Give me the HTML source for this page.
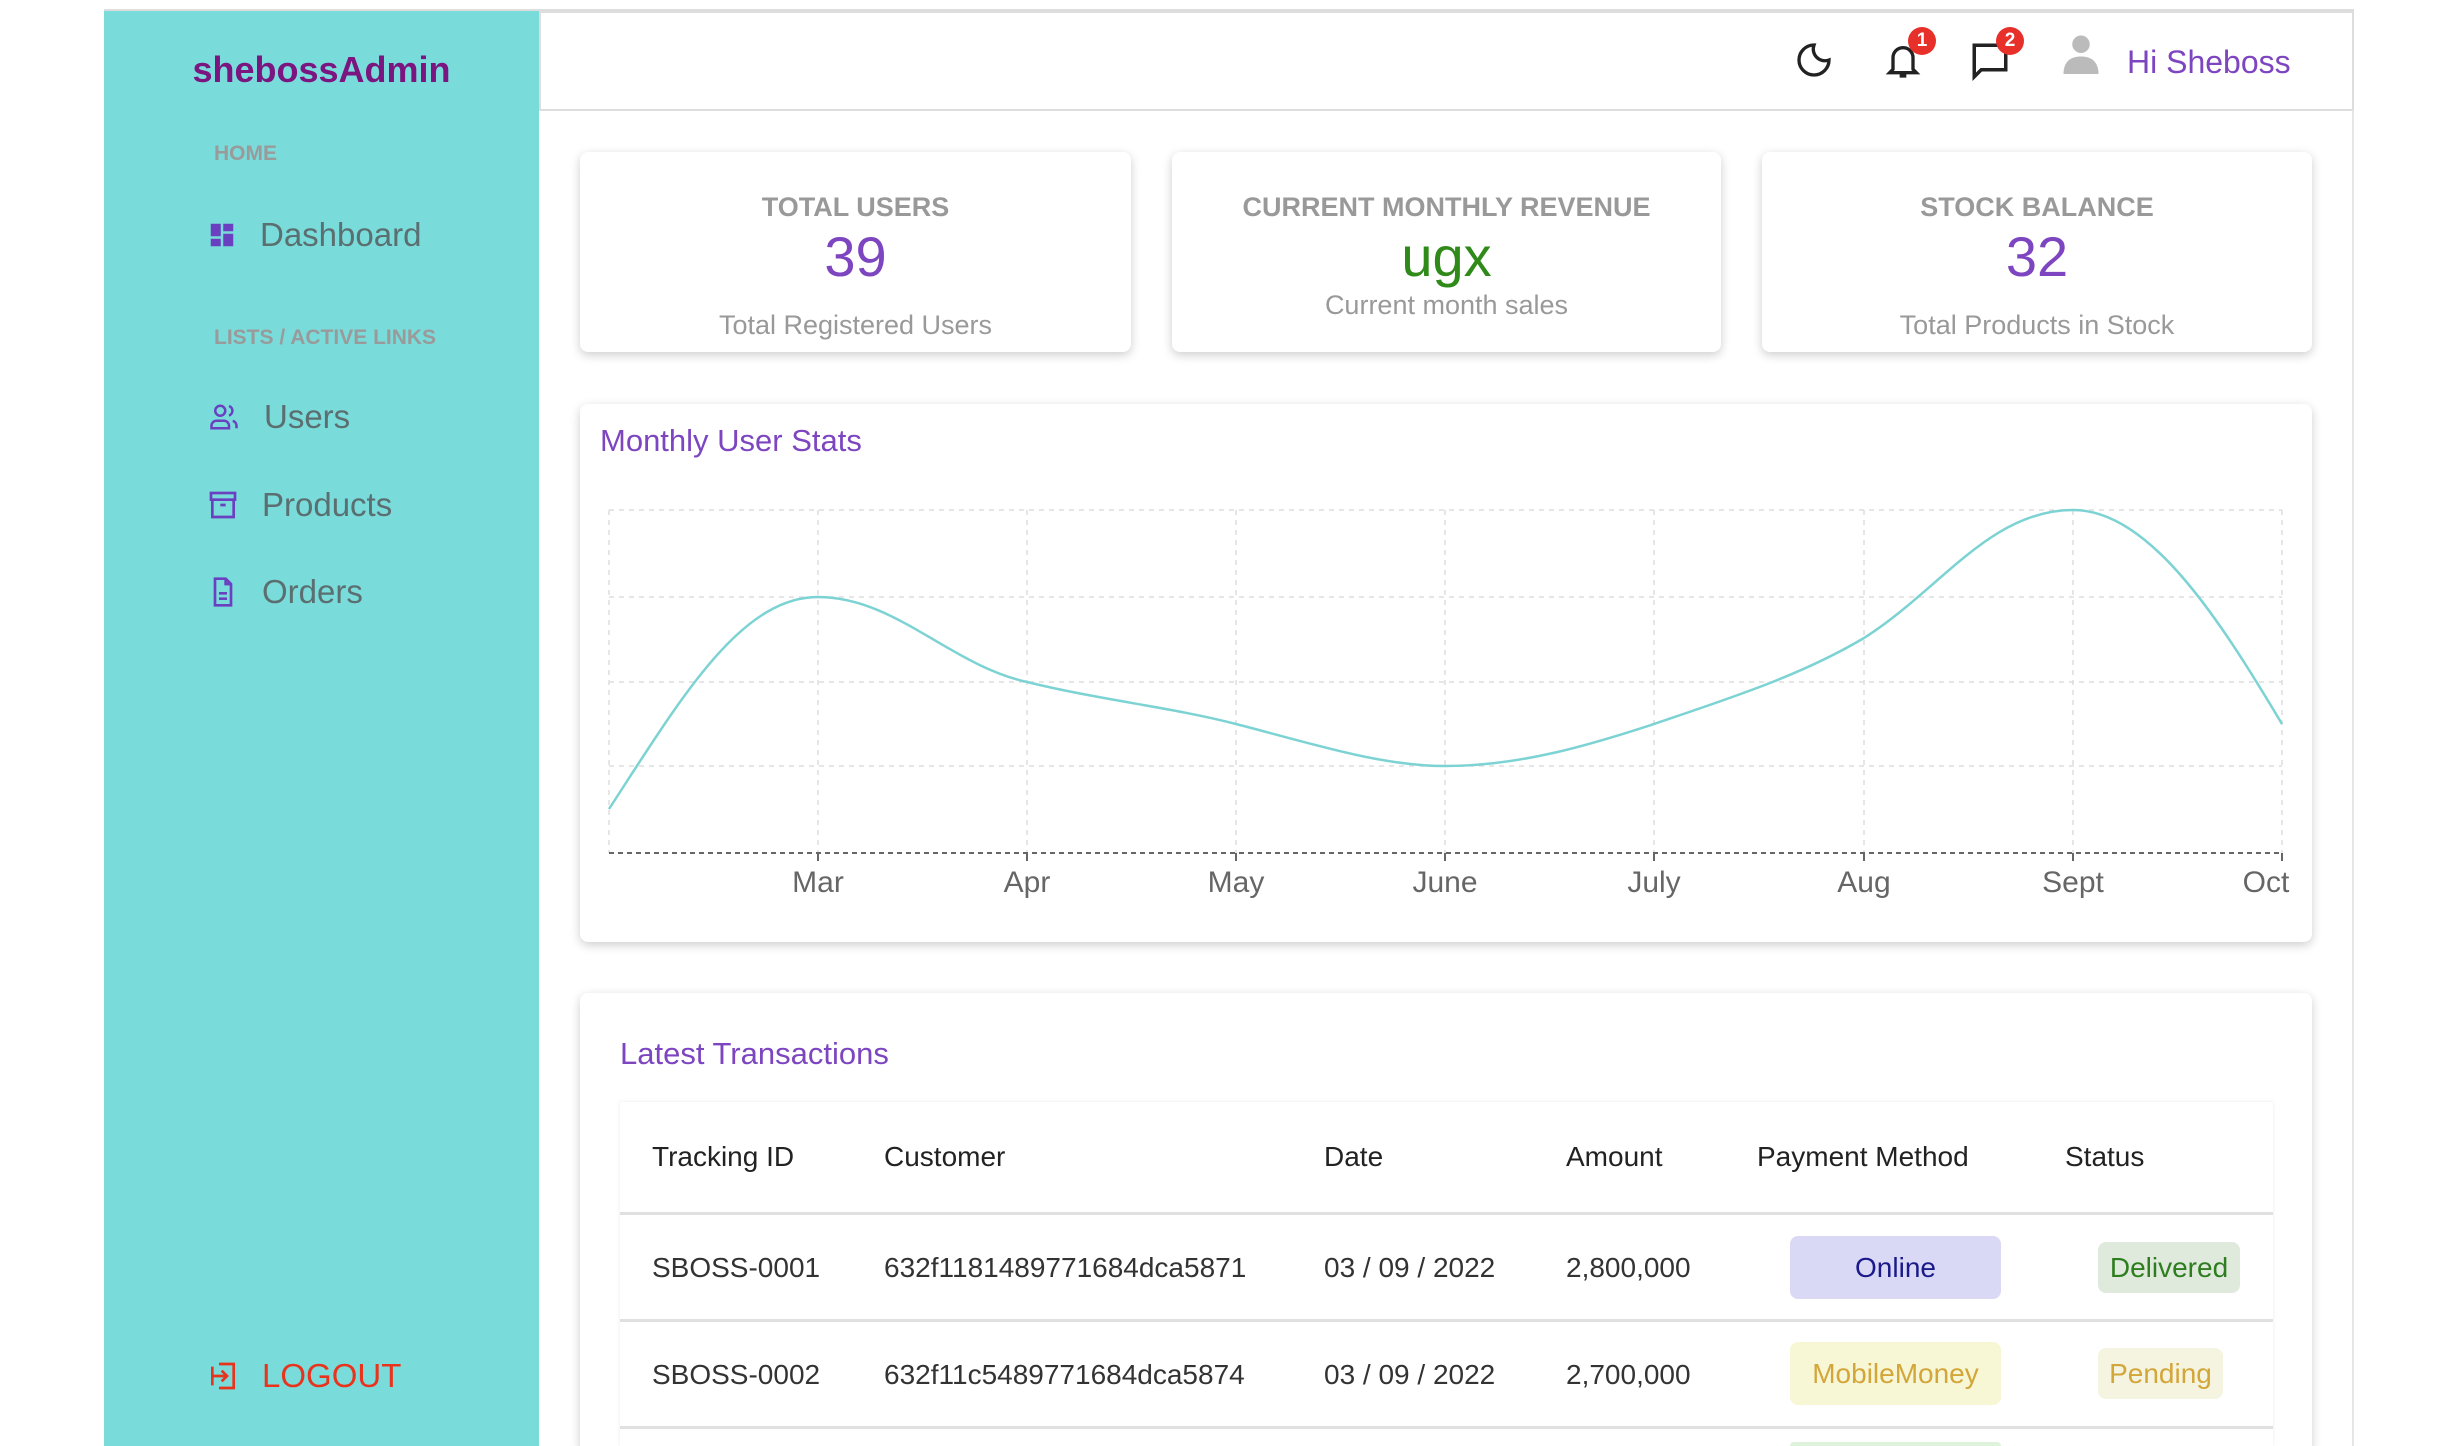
<!DOCTYPE html>
<html style="width:2450px;height:1446px;overflow:hidden"><head><meta charset="utf-8"><style>
*{margin:0;padding:0;box-sizing:border-box}
body{width:2450px;height:1446px;overflow:hidden;background:#fff;font-family:"Liberation Sans",Arial,sans-serif;position:relative}
.abs{position:absolute}
#sb{left:104px;top:11px;width:435px;height:1435px;background:#7adbdb}
.logo{left:0;width:435px;top:38px;text-align:center;font-size:36px;font-weight:bold;color:#7b1580}
.sec{left:110px;font-size:21px;font-weight:bold;color:#9a9a9a}
.nav{left:103px;font-size:33px;color:#5b6e70;display:flex;align-items:center}
.nav svg{margin-right:23px}
#hdr{left:539px;top:11px;width:1815px;height:100px;border:2px solid #ddd}
#rline{left:2352px;top:110px;width:2px;height:1336px;background:#e6e6e6}
.card{background:#fff;border-radius:8px;box-shadow:0 3px 10px rgba(0,0,0,.2)}
.stat{text-align:center}
.stat .t{position:absolute;left:0;right:0;top:40px;font-size:27px;font-weight:bold;color:#999}
.stat .n{position:absolute;left:0;right:0;top:72px;font-size:56px;color:#7d45c0}
.stat .s{position:absolute;left:0;right:0;top:158px;font-size:27px;color:#999}
.ttl{font-size:31px;color:#7d45c0}
.th{font-size:28px;color:#222}
.td{font-size:28px;color:#333}
.badge{position:absolute;border-radius:8px;font-size:28px;display:flex;align-items:center;justify-content:center}
.bdg{position:absolute;width:28px;height:28px;border-radius:50%;background:#e8302a;color:#fff;font-size:19px;font-weight:bold;text-align:center;line-height:28px}
#clip{position:absolute;left:0;top:0;width:2450px;height:1446px;overflow:hidden}
</style></head><body><div id="clip">
<div class="abs" style="left:104px;top:9px;width:2250px;height:2px;background:#ddd"></div>
<div id="sb" class="abs">
 <div class="abs logo">shebossAdmin</div>
 <div class="abs sec" style="top:131px">HOME</div>
 <div class="abs nav" style="top:205px"><svg width="30" height="30" viewBox="0 0 24 24"><path fill="#6a3fc0" d="M3 13h8V3H3zm0 8h8v-6H3zm10 0h8V11h-8zm0-18v6h8V3z"/></svg>Dashboard</div>
 <div class="abs sec" style="top:315px">LISTS / ACTIVE LINKS</div>
 <div class="abs nav" style="top:387px"><svg width="34" height="30" viewBox="0 0 24 24" fill="none" stroke="#6a3fc0" stroke-width="2"><circle cx="9" cy="7" r="4"/><path d="M2 21v-2a4 4 0 0 1 4-4h6a4 4 0 0 1 4 4v2zM16 3.2a4 4 0 0 1 0 7.6M22 21v-2a4 4 0 0 0-3-3.9"/></svg>Users</div>
 <div class="abs nav" style="top:475px"><svg width="32" height="32" viewBox="0 0 24 24" fill="none" stroke="#6a3fc0" stroke-width="2"><rect x="3" y="3" width="18" height="5"/><path d="M4 8v13h16V8M10 12h4"/></svg>Products</div>
 <div class="abs nav" style="top:562px"><svg width="32" height="32" viewBox="0 0 24 24" fill="none" stroke="#6a3fc0" stroke-width="2"><path d="M14 2H6v20h12V6zM14 2v4h4M9 13h6M9 17h6"/></svg>Orders</div>
 <div class="abs nav" style="top:1346px;color:#e8341c"><svg width="32" height="32" viewBox="0 0 24 24" fill="none" stroke="#e8341c" stroke-width="2"><path d="M9 3h11v18H9M3 12h12M11 8l4 4-4 4M4 5v14"/></svg>LOGOUT</div>
</div>
<div id="hdr" class="abs"></div>
<div id="rline" class="abs"></div>
<svg class="abs" style="left:1794px;top:40px" width="40" height="40" viewBox="0 0 24 24" fill="none" stroke="#222" stroke-width="2"><path d="M12 3a7 7 0 0 0 9 9 9 9 0 1 1-9-9z"/></svg>
<svg class="abs" style="left:1883px;top:40px" width="40" height="42" viewBox="0 0 24 24" fill="none" stroke="#222" stroke-width="2"><path d="M6 17V10a6 6 0 0 1 12 0v7l2 2H4zM10 21h4"/></svg>
<div class="bdg" style="left:1908px;top:27px">1</div>
<svg class="abs" style="left:1968px;top:40px" width="44" height="42" viewBox="0 0 24 24" fill="none" stroke="#222" stroke-width="2"><path d="M3 3h18v14H7l-4 4z"/></svg>
<div class="bdg" style="left:1996px;top:27px">2</div>
<svg class="abs" style="left:2060px;top:32px" width="42" height="42" viewBox="0 0 24 24"><circle cx="12" cy="7" r="5" fill="#bbb"/><path d="M2 24c0-7 4-10 10-10s10 3 10 10z" fill="#bbb"/></svg>
<div class="abs" style="left:2127px;top:44px;font-size:32px;color:#7d45c0">Hi Sheboss</div>

<div class="abs card stat" style="left:580px;top:152px;width:551px;height:200px"><div class="t">TOTAL USERS</div><div class="n">39</div><div class="s">Total Registered Users</div></div>
<div class="abs card stat" style="left:1172px;top:152px;width:549px;height:200px"><div class="t">CURRENT MONTHLY REVENUE</div><div class="n" style="color:#2f8a1a">ugx</div><div class="s" style="top:138px">Current month sales</div></div>
<div class="abs card stat" style="left:1762px;top:152px;width:550px;height:200px"><div class="t">STOCK BALANCE</div><div class="n">32</div><div class="s">Total Products in Stock</div></div>

<div class="abs card" style="left:580px;top:404px;width:1732px;height:538px"></div>
<div class="abs ttl" style="left:600px;top:423px">Monthly User Stats</div>
<svg class="abs" style="left:0;top:0" width="2450" height="1000">
<g stroke="#ddd" stroke-width="1.5" stroke-dasharray="5 5" fill="none">
<path d="M609 510H2282M609 597H2282M609 682H2282M609 766H2282"/>
<path d="M609 510V853M818 510V853M1027 510V853M1236 510V853M1445 510V853M1654 510V853M1864 510V853M2073 510V853M2282 510V853"/>
</g>
<path d="M609 853H2282" stroke="#666" stroke-width="2" stroke-dasharray="5 4"/>
<path d="M818 853v8M1027 853v8M1236 853v8M1445 853v8M1654 853v8M1864 853v8M2073 853v8M2282 853v8" stroke="#666" stroke-width="2"/>
<path d="M609 809 C680 700,740 597,818 597 C895 597,950 665,1027 682 C1100 700,1170 707,1236 724 C1310 743,1380 766,1445 766 C1520 766,1590 745,1654 724 C1730 698,1800 676,1864 638 C1940 590,1990 510,2073 510 C2150 510,2220 620,2282 724" stroke="#7dd3d3" stroke-width="2.5" fill="none"/>
<g font-family="Liberation Sans" font-size="30" fill="#666" text-anchor="middle">
<text x="818" y="892">Mar</text><text x="1027" y="892">Apr</text><text x="1236" y="892">May</text><text x="1445" y="892">June</text><text x="1654" y="892">July</text><text x="1864" y="892">Aug</text><text x="2073" y="892">Sept</text><text x="2266" y="892">Oct</text>
</g></svg>

<div class="abs card" style="left:580px;top:993px;width:1732px;height:460px"></div>
<div class="abs ttl" style="left:620px;top:1036px">Latest Transactions</div>
<div class="abs" style="left:620px;top:1102px;width:1653px;height:344px;background:#fff;box-shadow:0 0 4px rgba(0,0,0,.08)"></div>
<div class="abs" style="left:620px;top:1212px;width:1653px;height:3px;background:#e0e0e0"></div>
<div class="abs" style="left:620px;top:1319px;width:1653px;height:3px;background:#e0e0e0"></div>
<div class="abs" style="left:620px;top:1426px;width:1653px;height:3px;background:#e0e0e0"></div>
<div class="abs th" style="left:652px;top:1141px">Tracking ID</div>
<div class="abs th" style="left:884px;top:1141px">Customer</div>
<div class="abs th" style="left:1324px;top:1141px">Date</div>
<div class="abs th" style="left:1566px;top:1141px">Amount</div>
<div class="abs th" style="left:1757px;top:1141px">Payment Method</div>
<div class="abs th" style="left:2065px;top:1141px">Status</div>
<div class="abs td" style="left:652px;top:1252px">SBOSS-0001</div>
<div class="abs td" style="left:884px;top:1252px">632f1181489771684dca5871</div>
<div class="abs td" style="left:1324px;top:1252px">03 / 09 / 2022</div>
<div class="abs td" style="left:1566px;top:1252px">2,800,000</div>
<div class="badge" style="left:1790px;top:1236px;width:211px;height:63px;background:#d9d9f5;color:#1a1a8a">Online</div>
<div class="badge" style="left:2098px;top:1242px;width:142px;height:51px;background:#dfeadd;color:#2e7d1e">Delivered</div>
<div class="abs td" style="left:652px;top:1359px">SBOSS-0002</div>
<div class="abs td" style="left:884px;top:1359px">632f11c5489771684dca5874</div>
<div class="abs td" style="left:1324px;top:1359px">03 / 09 / 2022</div>
<div class="abs td" style="left:1566px;top:1359px">2,700,000</div>
<div class="badge" style="left:1790px;top:1342px;width:211px;height:63px;background:#f7f6d5;color:#d3a63a">MobileMoney</div>
<div class="badge" style="left:2098px;top:1348px;width:125px;height:51px;background:#f5f4e0;color:#d3a63a">Pending</div>
<div class="badge" style="left:1790px;top:1442px;width:211px;height:4px;border-radius:8px 8px 0 0;background:#dff3dc"></div>
</div></body></html>
